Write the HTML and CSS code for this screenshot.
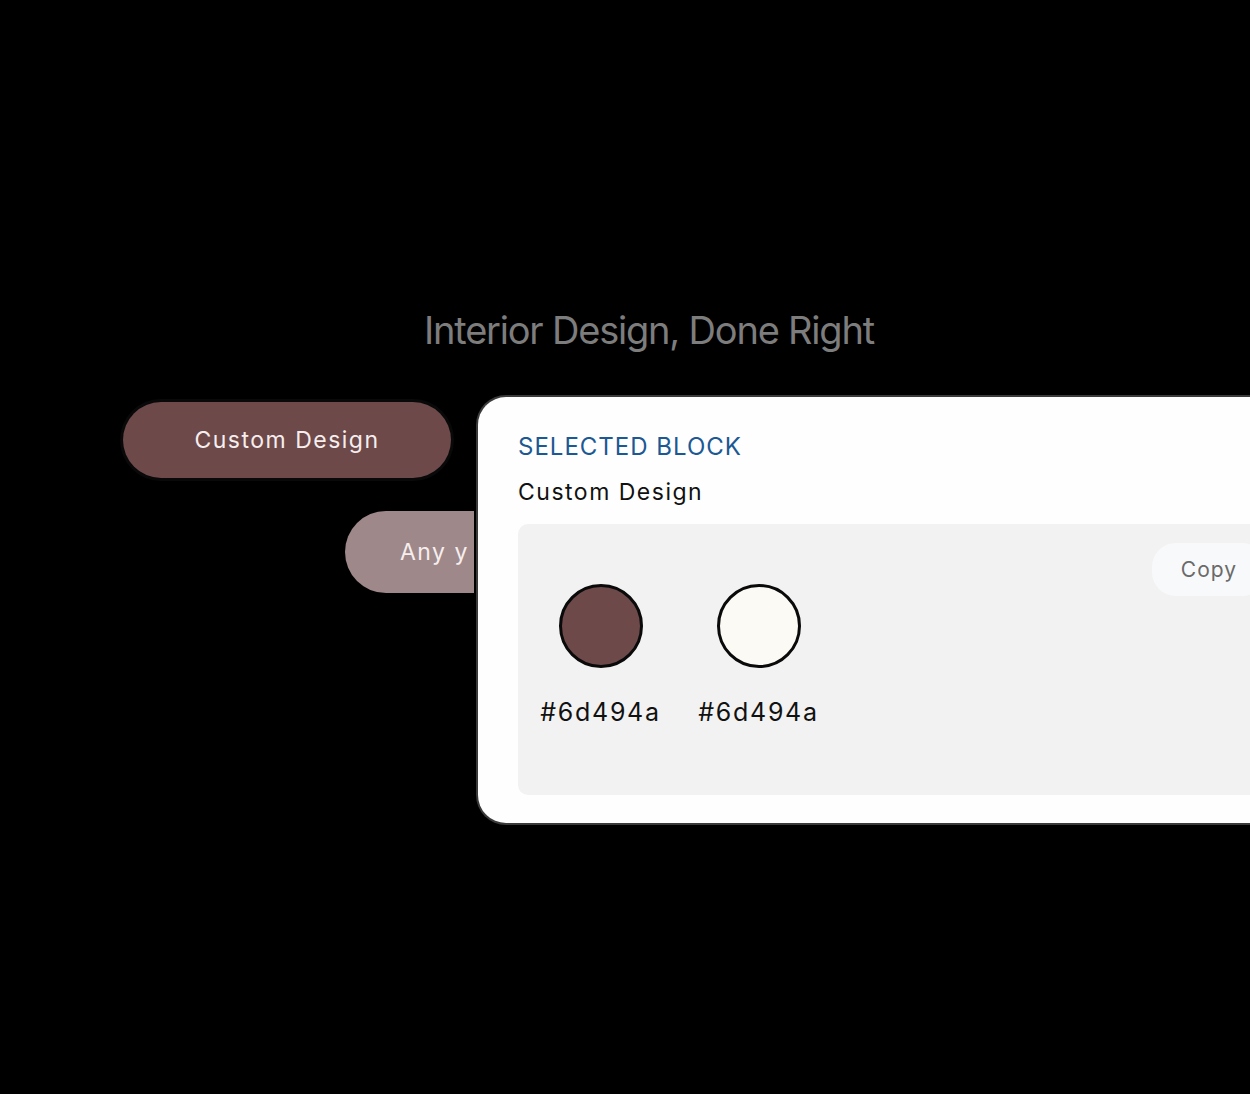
FILE: index.html
```html
<!DOCTYPE html>
<html lang="en">
<head>
<meta charset="utf-8">
<title>Interior Design, Done Right</title>
<link rel="stylesheet" href="styles.css">
</head>
<body>
<main class="page">
  <h1 class="headline">Interior Design, Done Right</h1>
  <section class="stage">
    <div class="chips">
      <div class="chip chip-primary">Custom Design</div>
      <div class="chip chip-secondary">Any y</div>
    </div>
    <div class="card">
      <div class="card-label">SELECTED BLOCK</div>
      <div class="card-title">Custom Design</div>
      <div class="panel">
        <div class="swatches">
          <div class="swatch">
            <div class="dot dot-dark"></div>
            <div class="hex">#6d494a</div>
          </div>
          <div class="swatch">
            <div class="dot dot-light"></div>
            <div class="hex">#6d494a</div>
          </div>
        </div>
        <button class="copy">Copy</button>
      </div>
    </div>
  </section>
</main>
</body>
</html>
```

FILE: styles.css
```css
html, body {
  margin: 0;
  padding: 0;
  background: #000;
  overflow: hidden;
}

body {
  width: 1250px;
  height: 1094px;
  font-family: Inter, "Liberation Sans", sans-serif;
}

.page {
  padding-top: 307px;
}

.headline {
  margin: 0;
  padding-left: 48px;
  text-align: center;
  font-family: Inter, "Liberation Sans", sans-serif;
  font-weight: 400;
  font-size: 38px;
  line-height: 46px;
  letter-spacing: -1.2px;
  color: #7d7d7d;
}

.stage {
  display: flex;
  margin-top: 42px;
  width: 1250px;
  overflow: hidden;
}

.chips {
  width: 474px;
  flex: none;
  box-sizing: border-box;
  padding-left: 123px;
  padding-top: 7px;
  overflow: hidden;
  display: flex;
  flex-direction: column;
  align-items: flex-start;
}

.chip {
  display: flex;
  align-items: center;
  justify-content: center;
  border-radius: 999px;
  font-size: 23px;
  letter-spacing: 1.5px;
  color: #f6eeee;
  white-space: nowrap;
  flex: none;
}

.chip-primary {
  width: 328px;
  height: 76px;
  background: #6d494a;
  box-shadow: 0 0 0 3px #090909;
}

.chip-secondary {
  margin-top: 33px;
  margin-left: 222px;
  width: 220px;
  height: 82px;
  background: #9e8889;
  justify-content: flex-start;
  padding-left: 55px;
  box-sizing: border-box;
}

.card {
  flex: none;
  width: 850px;
  margin-left: 2px;
  box-sizing: border-box;
  background: #fefefe;
  border: 2px solid #3a3a3a;
  border-right: none;
  border-radius: 30px 0 0 30px;
  padding: 35px 0 28px 40px;
}

.card-label {
  font-size: 24px;
  line-height: 30px;
  letter-spacing: 1px;
  color: #1c5893;
}

.card-title {
  margin-top: 15px;
  font-size: 23px;
  line-height: 30px;
  letter-spacing: 1.5px;
  color: #111;
}

.panel {
  margin-top: 17px;
  width: 765px;
  height: 271px;
  box-sizing: border-box;
  background: #f2f2f2;
  border-radius: 10px;
  padding: 19px 0 0 23px;
  display: flex;
  align-items: flex-start;
}

.swatches {
  display: flex;
  gap: 39px;
  margin-top: 41px;
}

.swatch {
  width: 119px;
  display: flex;
  flex-direction: column;
  align-items: center;
}

.dot {
  width: 84px;
  height: 84px;
  box-sizing: border-box;
  border-radius: 50%;
  border: 3px solid #0a0a0a;
}

.dot-dark {
  background: #6d494a;
}

.dot-light {
  background: #fbfaf5;
}

.hex {
  margin-top: 29px;
  font-size: 25px;
  line-height: 30px;
  letter-spacing: 1.7px;
  color: #111;
  white-space: nowrap;
}

.copy {
  margin-left: auto;
  margin-right: 17px;
  border: none;
  background: #f8f9fa;
  border-radius: 24px;
  height: 53px;
  padding: 0 29px;
  font-family: Inter, "Liberation Sans", sans-serif;
  font-size: 21px;
  letter-spacing: 1px;
  color: #6a6a6a;
}
```
